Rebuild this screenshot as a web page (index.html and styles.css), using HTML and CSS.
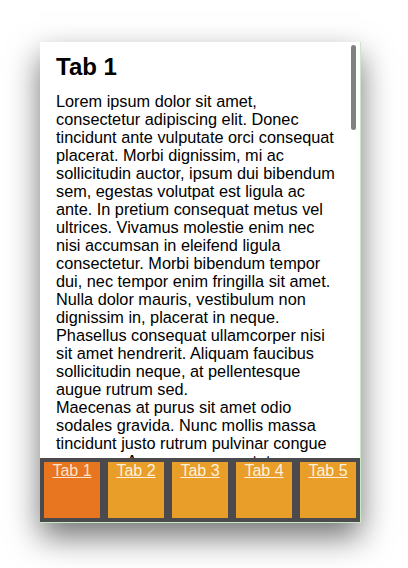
FILE: index.html
```html
<!DOCTYPE html>
<html lang="en">
<head>
  <meta charset="UTF-8">
  <meta name="viewport" content="width=device-width, initial-scale=1.0">
  <title>Tabs</title>
  <link rel="stylesheet" href="styles.css">
</head>
<body>
  <div class="screen">
    <div class="content">
      <div class="scrollbar"></div>
      <h1>Tab 1</h1>
      <p>Lorem ipsum dolor sit amet, consectetur adipiscing elit. Donec tincidunt ante vulputate orci consequat placerat. Morbi dignissim, mi ac sollicitudin auctor, ipsum dui bibendum sem, egestas volutpat est ligula ac ante. In pretium consequat metus vel ultrices. Vivamus molestie enim nec nisi accumsan in eleifend ligula consectetur. Morbi bibendum tempor dui, nec tempor enim fringilla sit amet. Nulla dolor mauris, vestibulum non dignissim in, placerat in neque. Phasellus consequat ullamcorper nisi sit amet hendrerit. Aliquam faucibus sollicitudin neque, at pellentesque augue rutrum sed.</p>
      <p>Maecenas at purus sit amet odio sodales gravida. Nunc mollis massa tincidunt justo rutrum pulvinar congue non sem. Aenean a consectetur sem.</p>
    </div>

    <!-- Tab bar -->
    <nav class="tabbar">
      <a href="#" class="tab active">Tab 1</a>
      <a href="#" class="tab">Tab 2</a>
      <a href="#" class="tab">Tab 3</a>
      <a href="#" class="tab">Tab 4</a>
      <a href="#" class="tab">Tab 5</a>
    </nav>
  </div>
</body>
</html>
```

FILE: styles.css
```css
* {
  margin: 0;
  padding: 0;
  box-sizing: border-box;
  font-family: "Liberation Sans", Arial, sans-serif;
}

html,
body {
  height: 100%;
}

body {
  background: #fff;
  padding: 42px 0 0 40px;
}

.screen {
  width: 321px;
  height: 481px;
  display: flex;
  flex-direction: column;
  background: #fff;
  border-right: 1px solid #cbe8c4;
  border-bottom: 1px solid #cbe8c4;
  box-shadow: 0 14px 30px rgba(0, 0, 0, 0.55);
}

.content {
  position: relative;
  flex: 1;
  overflow: hidden;
  padding: 11px 20px 0 16px;
  color: #000;
}

.content h1 {
  font-size: 24px;
  line-height: 28px;
  font-weight: bold;
  margin-bottom: 11px;
}

.content p {
  font-size: 16.3px;
  line-height: 18px;
}

.scrollbar {
  position: absolute;
  top: 3px;
  right: 4px;
  width: 5px;
  height: 85px;
  border-radius: 3px;
  background: #808080;
}

.tabbar {
  height: 64px;
  display: flex;
  gap: 8px;
  padding: 4px;
  background: #4b4b4d;
}

.tab {
  flex: 1;
  min-width: 0;
  background: #e99e29;
  color: #fdf1de;
  font-size: 16px;
  line-height: 18px;
  text-align: center;
  text-decoration: underline;
}

.tab.active {
  background: #e87520;
  color: #fbe3cd;
}
```
